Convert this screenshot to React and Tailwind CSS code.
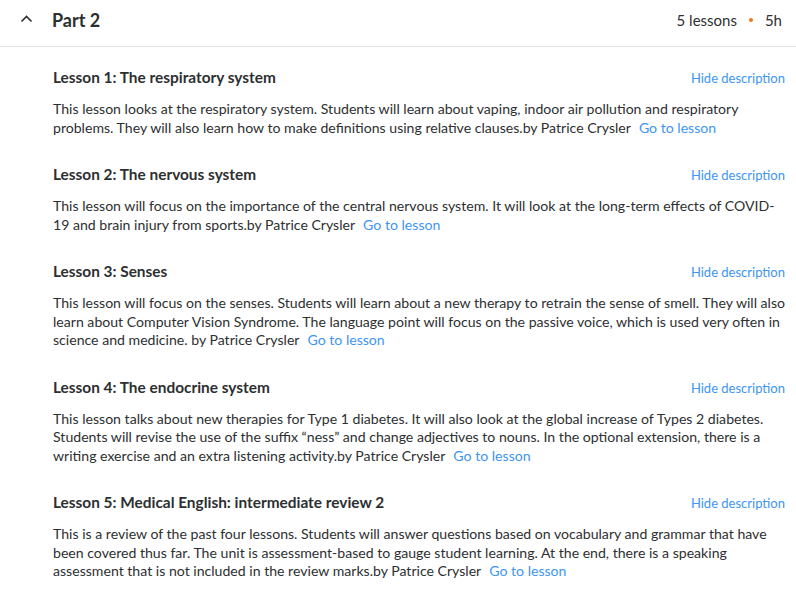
import React from 'react';

const lessons = [
    {
        title: 'Lesson 1: The respiratory system',
        text: 'This lesson looks at the respiratory system. Students will learn about vaping, indoor air pollution and respiratory problems. They will also learn how to make definitions using relative clauses.by Patrice Crysler',
    },
    {
        title: 'Lesson 2: The nervous system',
        text: 'This lesson will focus on the importance of the central nervous system. It will look at the long-term effects of COVID-19 and brain injury from sports.by Patrice Crysler',
    },
    {
        title: 'Lesson 3: Senses',
        text: 'This lesson will focus on the senses. Students will learn about a new therapy to retrain the sense of smell. They will also learn about Computer Vision Syndrome. The language point will focus on the passive voice, which is used very often in science and medicine. by Patrice Crysler',
    },
    {
        title: 'Lesson 4: The endocrine system',
        text: 'This lesson talks about new therapies for Type 1 diabetes. It will also look at the global increase of Types 2 diabetes. Students will revise the use of the suffix \u201cness\u201d and change adjectives to nouns. In the optional extension, there is a writing exercise and an extra listening activity.by Patrice Crysler',
    },
    {
        title: 'Lesson 5: Medical English: intermediate review 2',
        text: 'This is a review of the past four lessons. Students will answer questions based on vocabulary and grammar that have been covered thus far. The unit is assessment-based to gauge student learning. At the end, there is a speaking assessment that is not included in the review marks.by Patrice Crysler',
    },
];

const App = () => {
    return (
        <div className="w-full bg-white text-[#2d2f31] font-['Lato',sans-serif]">
            {/* Section header */}
            <div className="flex items-center h-[47px] pb-[6px] pl-[20px] pr-[14px] border-b border-[#e4e4e4]">
                <svg width="13" height="13" viewBox="0 0 13 13" className="mr-[19px] -mt-[2px]">
                    <path d="M1.5 8.5 L6.5 3.5 L11.5 8.5" fill="none" stroke="#2d2f31" strokeWidth="1.6" />
                </svg>
                <h3 className="text-[18px] font-bold leading-none">Part 2</h3>
                <div className="ml-auto flex items-center text-[15px]">
                    <span>5 lessons</span>
                    <span className="mx-[12px] w-[4px] h-[4px] rounded-full bg-[#f3741c]" />
                    <span>5h</span>
                </div>
            </div>

            {/* Lessons */}
            <div className="pl-[53px] pr-[11px] pt-[20px]">
                {lessons.map((lesson) => (
                    <div key={lesson.title} className="mb-[27px]">
                        <div className="flex items-center justify-between h-[20px]">
                            <h4 className="text-[15.4px] font-bold leading-[20px]">{lesson.title}</h4>
                            <button className="text-[13px] leading-[20px] mt-[2px] text-[#3e95f2]">Hide description</button>
                        </div>
                        <p className="mt-[13px] -mr-[4px] text-[14.1px] leading-[18.5px]">
                            <span>{lesson.text}</span>
                            <span className="pl-[8px]">
                                <a href="#" className="text-[#3e95f2]">Go to lesson</a>
                            </span>
                        </p>
                    </div>
                ))}
            </div>
        </div>
    );
};

export default App;
